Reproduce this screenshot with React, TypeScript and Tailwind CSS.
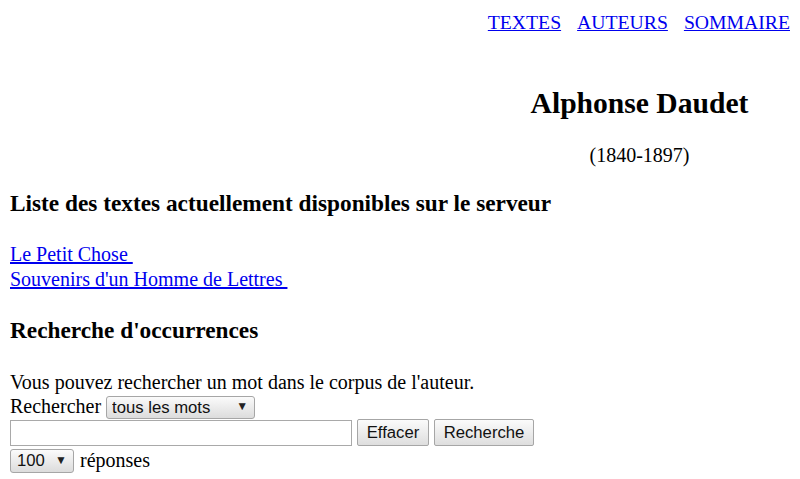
export default function App() {
  const serif = "font-['Liberation_Serif',serif]";
  const sans = "font-['Liberation_Sans',Arial,sans-serif]";

  return (
    <div className={`${serif} text-[20px] leading-[23px] text-black bg-white min-h-[479px] px-[10px] pt-[11px]`}>
      <nav className="flex justify-end gap-[16px] text-[19.7px]">
        <a href="#" className="text-[#0000ee] underline">TEXTES</a>
        <a href="#" className="text-[#0000ee] underline">AUTEURS</a>
        <a href="#" className="text-[#0000ee] underline">SOMMAIRE</a>
      </nav>

      <div className="flex justify-end mt-[52px]">
        <div className="w-[301px] text-center">
          <h1 className="text-[29.6px] leading-[34px] font-bold">Alphonse Daudet</h1>
          <p className="mt-[24px]">(1840-1897)</p>
        </div>
      </div>

      <h2 className="mt-[23px] text-[23.3px] leading-[27px] font-bold">
        Liste des textes actuellement disponibles sur le serveur
      </h2>
      <div className="mt-[25px] flex flex-col items-start leading-[25px]">
        <a href="#" className="text-[#0000ee] underline">Le Petit Chose&nbsp;</a>
        <a href="#" className="text-[#0000ee] underline">Souvenirs d'un Homme de Lettres&nbsp;</a>
      </div>

      <h2 className="mt-[25px] text-[23.3px] leading-[27px] font-bold">Recherche d'occurrences</h2>

      <form className="mt-[27px]" onSubmit={e => e.preventDefault()}>
        <p>Vous pouvez rechercher un mot dans le corpus de l'auteur.</p>
        <div className="flex items-center h-[25px]">
          <span>Rechercher</span>
          <div className="relative ml-[5px]">
            <select
              defaultValue="tous"
              className={`${sans} appearance-none w-[149px] h-[23px] pl-[5px] text-[16.7px] leading-[21px] text-[#111] border border-[#a6a6a6] rounded-[3px] bg-gradient-to-b from-[#fbfbfb] to-[#dcdcdc]`}
            >
              <option value="tous">tous les mots</option>
              <option value="un">un des mots</option>
            </select>
            <span className="absolute right-[7px] top-[4px] text-[12px] leading-[14px] text-[#222] pointer-events-none">▼</span>
          </div>
        </div>
        <div className="flex items-center h-[27px] gap-[5px]">
          <input
            type="text"
            className="w-[342px] h-[26px] border border-[#a9a9a9] bg-white px-[3px] outline-none"
          />
          <button
            type="button"
            className={`${sans} w-[72px] h-[27px] text-[16.7px] text-[#111] border border-[#a6a6a6] rounded-[2px] bg-gradient-to-b from-[#fbfbfb] to-[#dedede]`}
          >
            Effacer
          </button>
          <button
            type="submit"
            className={`${sans} w-[100px] h-[27px] text-[16.7px] text-[#111] border border-[#a6a6a6] rounded-[2px] bg-gradient-to-b from-[#fbfbfb] to-[#dedede]`}
          >
            Recherche
          </button>
        </div>
        <div className="flex items-center h-[26px] mt-[1px]">
          <div className="relative">
            <select
              defaultValue="100"
              className={`${sans} appearance-none w-[64px] h-[24px] pl-[6px] text-[16.7px] leading-[22px] text-[#111] border border-[#a6a6a6] rounded-[3px] bg-gradient-to-b from-[#fbfbfb] to-[#dcdcdc]`}
            >
              <option value="10">10</option>
              <option value="50">50</option>
              <option value="100">100</option>
            </select>
            <span className="absolute right-[7px] top-[5px] text-[12px] leading-[14px] text-[#222] pointer-events-none">▼</span>
          </div>
          <span className="ml-[6px]">réponses</span>
        </div>
      </form>
    </div>
  );
}
